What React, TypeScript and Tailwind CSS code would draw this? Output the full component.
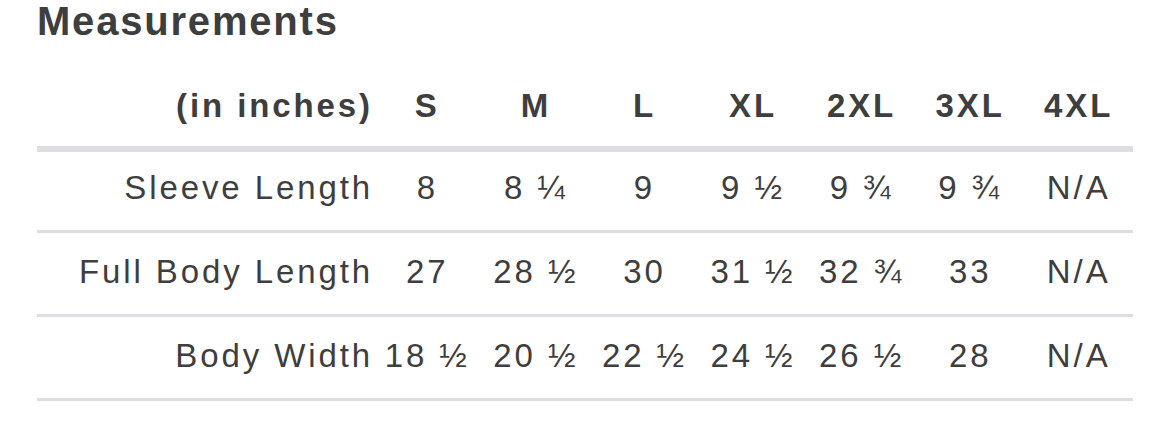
const sizes = ['S', 'M', 'L', 'XL', '2XL', '3XL', '4XL']

const rows = [
  { label: 'Sleeve Length', values: ['8', '8 ¼', '9', '9 ½', '9 ¾', '9 ¾', 'N/A'], first: true },
  { label: 'Full Body Length', values: ['27', '28 ½', '30', '31 ½', '32 ¾', '33', 'N/A'] },
  { label: 'Body Width', values: ['18 ½', '20 ½', '22 ½', '24 ½', '26 ½', '28', 'N/A'] },
]

export default function App() {
  return (
    <div className="w-[1170px] h-[424px] bg-white px-[37px] text-[#3e3e3e] font-['Liberation_Sans',Arial,sans-serif]">
      <h2 className="pt-[1px] text-[40px] leading-none font-bold tracking-[1.8px]">Measurements</h2>

      <div className="w-[1096px] mt-[48px]">
        {/* Header row */}
        <div className="grid grid-cols-[336px_repeat(7,1fr)] pb-[24px] border-b-[6px] border-[#dddde2] text-[33px] leading-none font-bold tracking-[2.9px]">
          <div className="text-right">(in inches)</div>
          {sizes.map((s) => (
            <div key={s} className="text-center">{s}</div>
          ))}
        </div>

        {/* Body rows */}
        {rows.map((row) => (
          <div
            key={row.label}
            className={`grid grid-cols-[336px_repeat(7,1fr)] border-b-[3px] border-[#dddde2] text-[33px] leading-none tracking-[2.9px] whitespace-nowrap ${
              row.first ? 'h-[81px] pt-[19px]' : 'h-[84px] pt-[22px]'
            }`}
          >
            <div className="text-right">{row.label}</div>
            {row.values.map((v, i) => (
              <div key={i} className="text-center">{v}</div>
            ))}
          </div>
        ))}
      </div>
    </div>
  )
}
